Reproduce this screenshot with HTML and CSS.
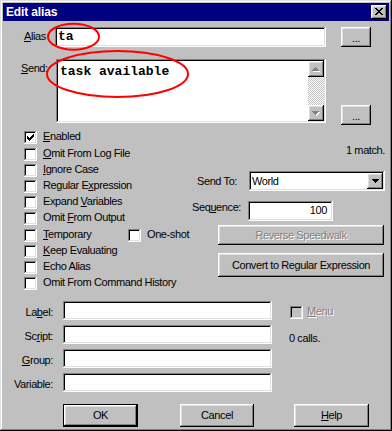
FILE: index.html
```html
<!DOCTYPE html>
<html lang="en">
<head>
  <meta charset="UTF-8">
  <title>Edit alias</title>
  <link rel="stylesheet" href="styles.css">
</head>
<body>
  <div class="window">
    <div class="titlebar">
      <span class="title">Edit alias</span>
      <div class="close-btn raised">
        <svg width="8" height="7" viewBox="0 0 8 7" shape-rendering="crispEdges"><path fill="#000" d="M0 0h2v1h-2z M6 0h2v1h-2z M1 1h2v1h-2z M5 1h2v1h-2z M2 2h4v1h-4z M3 3h2v1h-2z M2 4h4v1h-4z M1 5h2v1h-2z M5 5h2v1h-2z M0 6h2v1h-2z M6 6h2v1h-2z"/></svg>
      </div>
    </div>

    <div class="content">
      <!-- alias -->
      <div class="alias-row">
        <span class="lbl alias-lbl"><u>A</u>lias</span>
        <div class="field alias-field sunken"><span class="mono">ta</span></div>
        <div class="btn dots raised">...</div>
      </div>

      <!-- send -->
      <div class="send-row">
        <span class="lbl send-lbl"><u>S</u>end:</span>
        <div class="send-field sunken">
          <div class="send-text mono">task available</div>
          <div class="vscroll">
            <div class="sb-btn raised">
              <svg width="8" height="5" viewBox="0 0 8 5" shape-rendering="crispEdges"><path fill="#fff" transform="translate(1 1)" d="M3 0h1v1h-1z M2 1h3v1h-3z M1 2h5v1h-5z M0 3h7v1h-7z"/><path fill="#808080" d="M3 0h1v1h-1z M2 1h3v1h-3z M1 2h5v1h-5z M0 3h7v1h-7z"/></svg>
            </div>
            <div class="sb-track"></div>
            <div class="sb-btn raised">
              <svg width="8" height="5" viewBox="0 0 8 5" shape-rendering="crispEdges"><path fill="#fff" transform="translate(1 1)" d="M0 0h7v1h-7z M1 1h5v1h-5z M2 2h3v1h-3z M3 3h1v1h-1z"/><path fill="#808080" d="M0 0h7v1h-7z M1 1h5v1h-5z M2 2h3v1h-3z M3 3h1v1h-1z"/></svg>
            </div>
          </div>
        </div>
        <div class="btn dots dots-low raised">...</div>
      </div>

      <!-- options -->
      <div class="options">
        <div class="checks">
          <div class="chk tall">
            <span class="cb"><svg width="7" height="7" viewBox="0 0 7 7" shape-rendering="crispEdges"><path fill="#000" d="M6 0h1v1h-1z M5 1h2v1h-2z M0 2h1v1h-1z M4 2h3v1h-3z M0 3h2v1h-2z M3 3h3v1h-3z M0 4h5v1h-5z M1 5h3v1h-3z M2 6h1v1h-1z"/></svg></span>
            <span class="txt"><u>E</u>nabled</span>
          </div>
          <div class="chk"><span class="cb"></span><span class="txt"><u>O</u>mit From Log File</span></div>
          <div class="chk"><span class="cb"></span><span class="txt"><u>I</u>gnore Case</span></div>
          <div class="chk"><span class="cb"></span><span class="txt">Regular E<u>x</u>pression</span></div>
          <div class="chk"><span class="cb"></span><span class="txt">Expand <u>V</u>ariables</span></div>
          <div class="chk tall"><span class="cb"></span><span class="txt">Omit <u>F</u>rom Output</span></div>
          <div class="chk">
            <div class="chk-item wide"><span class="cb"></span><span class="txt"><u>T</u>emporary</span></div>
            <div class="chk-item"><span class="cb"></span><span class="txt">One-shot</span></div>
          </div>
          <div class="chk"><span class="cb"></span><span class="txt"><u>K</u>eep Evaluating</span></div>
          <div class="chk"><span class="cb"></span><span class="txt">Echo Alias</span></div>
          <div class="chk"><span class="cb"></span><span class="txt">Omit From Command History</span></div>
        </div>

        <div class="side">
          <div class="match">1 match.</div>
          <div class="sendto-row">
            <span class="sendto-lbl">Send To:</span>
            <div class="combo sunken">
              <span class="combo-text">World</span>
              <div class="combo-btn raised">
                <svg width="7" height="4" viewBox="0 0 7 4" shape-rendering="crispEdges"><path fill="#000" d="M0 0h7v1h-7z M1 1h5v1h-5z M2 2h3v1h-3z M3 3h1v1h-1z"/></svg>
              </div>
            </div>
          </div>
          <div class="seq-row">
            <span class="seq-lbl">Seq<u>u</u>ence:</span>
            <div class="field seq-field sunken">100</div>
          </div>
          <div class="btn wide-btn reverse raised disabled">Reverse Speedwalk</div>
          <div class="btn wide-btn convert raised">Convert to Regular Expression</div>
        </div>
      </div>

      <!-- extra fields -->
      <div class="extras">
        <div class="fields">
          <div class="frow"><span class="flbl">La<u>b</u>el:</span><div class="field sunken"></div></div>
          <div class="frow"><span class="flbl">Sc<u>r</u>ipt:</span><div class="field sunken"></div></div>
          <div class="frow"><span class="flbl"><u>G</u>roup:</span><div class="field sunken"></div></div>
          <div class="frow"><span class="flbl">Variable:</span><div class="field sunken"></div></div>
        </div>
        <div class="extras-side">
          <div class="menu-chk"><span class="cb off"></span><span class="txt disabled"><u>M</u>enu</span></div>
          <div class="calls">0 calls.</div>
        </div>
      </div>

      <!-- buttons -->
      <div class="buttons">
        <div class="btn dlg-btn default">OK</div>
        <div class="btn dlg-btn cancel raised">Cancel</div>
        <div class="btn dlg-btn help raised"><u>H</u>elp</div>
      </div>
    </div>

    <!-- red marks drawn over the dialog -->
    <svg class="marks" width="392" height="431" viewBox="0 0 392 431">
      <ellipse cx="73.5" cy="36.7" rx="25.5" ry="13" fill="none" stroke="#ff0000" stroke-width="2"/>
      <ellipse cx="117.5" cy="74" rx="70.5" ry="23" fill="none" stroke="#ff0000" stroke-width="2"/>
    </svg>
  </div>
</body>
</html>
```

FILE: styles.css
```css
html, body {
  margin: 0;
  background: #c0c0c0;
}

body {
  font-family: "Liberation Sans", Arial, sans-serif;
  font-size: 11px;
  line-height: 13px;
  letter-spacing: -0.4px;
  color: #000;
}

u {
  text-underline-offset: 1px;
}

.window {
  position: relative;
  width: 392px;
  height: 431px;
  box-sizing: border-box;
  padding: 3px;
  background: #c0c0c0;
  box-shadow: inset -1px -1px #000, inset 1px 1px #dfdfdf, inset -2px -2px #808080, inset 2px 2px #fff;
}

/* bevels */
.raised {
  background: #c0c0c0;
  box-shadow: inset -1px -1px #000, inset 1px 1px #fff, inset -2px -2px #808080, inset 2px 2px #dfdfdf;
}

.sunken {
  background: #fff;
  box-shadow: inset -1px -1px #fff, inset 1px 1px #808080, inset -2px -2px #dfdfdf, inset 2px 2px #000;
}

.titlebar {
  height: 18px;
  background: #000080;
  display: flex;
  align-items: center;
  justify-content: space-between;
  padding: 0 2px 0 3px;
}

.title {
  color: #fff;
  font-weight: bold;
  font-size: 12px;
  letter-spacing: -0.15px;
}

.close-btn {
  width: 16px;
  height: 14px;
  display: flex;
  align-items: center;
  justify-content: center;
}

.close-btn svg {
  margin: 0 1px 1px 0;
}

.mono {
  font-family: "Liberation Mono", "Courier New", monospace;
  font-weight: bold;
  font-size: 13px;
  line-height: 15px;
  letter-spacing: 0;
}

.btn {
  box-sizing: border-box;
  display: flex;
  align-items: center;
  justify-content: center;
  flex: none;
}

.field {
  box-sizing: border-box;
  height: 19px;
}

.lbl {
  box-sizing: border-box;
  flex: none;
}

/* alias row */
.alias-row {
  display: flex;
  height: 20px;
  margin-top: 6px;
}

.alias-lbl {
  width: 52px;
  padding: 3px 0 0 21px;
}

.alias-field {
  width: 271px;
  height: 20px;
  padding: 2px 0 0 3px;
}

.dots {
  width: 30px;
  height: 20px;
  margin-left: 15px;
  padding-top: 2px;
}

/* send row */
.send-row {
  display: flex;
  height: 64px;
  margin-top: 12px;
}

.send-lbl {
  width: 53px;
  padding: 3px 0 0 18px;
}

.send-field {
  width: 270px;
  height: 64px;
  box-sizing: border-box;
  padding: 2px;
  display: flex;
}

.send-text {
  flex: 1;
  padding: 3px 0 0 2px;
}

.vscroll {
  width: 16px;
  display: flex;
  flex-direction: column;
}

.sb-btn {
  height: 16px;
  display: flex;
  align-items: center;
  justify-content: center;
  flex: none;
}

.sb-track {
  flex: 1;
  background: repeating-conic-gradient(#c0c0c0 0 25%, #fff 0 50%) 0 0 / 2px 2px;
}

.dots-low {
  align-self: flex-end;
  margin-bottom: -2px;
}

/* options block */
.options {
  display: flex;
  margin-top: 8px;
}

.checks {
  width: 187px;
  box-sizing: border-box;
  padding-left: 21px;
}

.chk {
  display: flex;
  align-items: flex-start;
  height: 16px;
}

.chk.tall {
  height: 17px;
}

.chk-item {
  display: flex;
  align-items: flex-start;
}

.chk-item.wide {
  width: 104px;
}

.cb {
  width: 13px;
  height: 13px;
  box-sizing: border-box;
  flex: none;
  display: flex;
  align-items: center;
  justify-content: center;
  background: #fff;
  box-shadow: inset -1px -1px #fff, inset 1px 1px #808080, inset -2px -2px #dfdfdf, inset 2px 2px #000;
}

.cb.off {
  background: #c0c0c0;
}

.txt {
  margin: -1px 0 0 6px;
  white-space: nowrap;
}

.disabled {
  color: #808080;
  text-shadow: 1px 1px 0 #fff;
}

.side {
  flex: 1;
}

.match {
  margin-top: 13px;
  padding-right: 4px;
  text-align: right;
}

.sendto-row {
  display: flex;
  align-items: center;
  height: 20px;
  margin-top: 14px;
}

.sendto-lbl {
  width: 59px;
  box-sizing: border-box;
  padding-left: 7px;
}

.combo {
  width: 136px;
  height: 20px;
  box-sizing: border-box;
  padding: 2px;
  display: flex;
  align-items: center;
}

.combo-text {
  flex: 1;
  padding-left: 1px;
}

.combo-btn {
  width: 16px;
  height: 16px;
  display: flex;
  align-items: center;
  justify-content: center;
}

.seq-row {
  display: flex;
  align-items: flex-start;
  height: 20px;
  margin-top: 10px;
}

.seq-lbl {
  width: 58px;
  box-sizing: border-box;
  padding-left: 2px;
}

.seq-field {
  width: 85px;
  height: 20px;
  padding: 3px 6px 0 0;
  text-align: right;
}

.wide-btn {
  width: 166px;
  margin-left: 28px;
}

.reverse {
  height: 20px;
  margin-top: 4px;
}

.convert {
  height: 24px;
  margin-top: 8px;
}

/* extra fields */
.extras {
  display: flex;
  margin-top: 8px;
}

.fields {
  width: 269px;
}

.frow {
  display: flex;
  height: 19px;
  margin-bottom: 5px;
}

.flbl {
  width: 60px;
  box-sizing: border-box;
  padding: 5px 10px 0 0;
  text-align: right;
}

.frow .field {
  width: 209px;
}

.extras-side {
  margin-left: 17px;
  padding-top: 5px;
}

.menu-chk {
  display: flex;
  align-items: flex-start;
  margin-left: 1px;
}

.menu-chk .txt {
  margin-left: 4px;
}

.calls {
  margin-top: 13px;
}

/* dialog buttons */
.buttons {
  display: flex;
  margin-top: 7px;
  padding-left: 60px;
}

.dlg-btn {
  width: 75px;
  height: 23px;
}

.default {
  border: 1px solid #000;
  background: #c0c0c0;
  box-shadow: inset -1px -1px #000, inset 1px 1px #fff, inset -2px -2px #808080, inset 2px 2px #dfdfdf;
}

.cancel {
  width: 74px;
  margin-left: 42px;
}

.help {
  margin-left: 40px;
}

.marks {
  position: absolute;
  top: 0;
  left: 0;
  pointer-events: none;
}
```
